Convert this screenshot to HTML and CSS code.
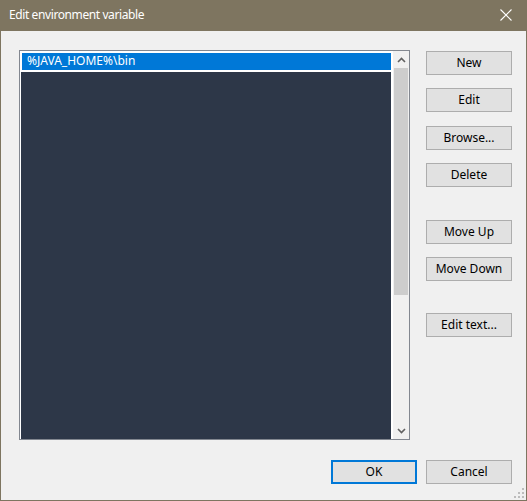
FILE: index.html
```html
<!DOCTYPE html>
<html>
<head>
<meta charset="utf-8">
<title>Edit environment variable</title>
<link rel="stylesheet" href="styles.css">
</head>
<body>
<div class="window">
  <div class="titlebar">
    <span class="title">Edit environment variable</span>
    <svg class="close" width="12" height="12" viewBox="0 0 12 12"><path d="M0.5 0.5 L11.5 11.5 M11.5 0.5 L0.5 11.5" stroke="#fff" stroke-width="1.1" fill="none"/></svg>
  </div>
  <div class="content">
    <div class="main">
      <div class="listbox">
        <div class="list">
          <div class="item"><div class="item-inner">%JAVA_HOME%\bin</div></div>
        </div>
        <div class="scrollbar">
          <div class="arrow">
            <svg width="9" height="6" viewBox="0 0 9 6"><path d="M1 5 L4.5 1.5 L8 5" stroke="#606060" stroke-width="1.6" fill="none"/></svg>
          </div>
          <div class="track"><div class="thumb"></div></div>
          <div class="arrow">
            <svg width="9" height="6" viewBox="0 0 9 6"><path d="M1 1 L4.5 4.5 L8 1" stroke="#606060" stroke-width="1.6" fill="none"/></svg>
          </div>
        </div>
      </div>
      <div class="buttons">
        <button class="btn">New</button>
        <button class="btn">Edit</button>
        <button class="btn mt14">Browse...</button>
        <button class="btn">Delete</button>
        <button class="btn group">Move Up</button>
        <button class="btn">Move Down</button>
        <button class="btn group2">Edit text...</button>
      </div>
    </div>
    <div class="footer">
      <button class="btn default">OK</button>
      <button class="btn">Cancel</button>
    </div>
    <div class="grip">
      <span class="dot d1"></span>
      <span class="dot d2"></span>
      <span class="dot d3"></span>
      <span class="dot d4"></span>
      <span class="dot d5"></span>
      <span class="dot d6"></span>
    </div>
  </div>
</div>
</body>
</html>
```
FILE: styles.css
```css
* { box-sizing: border-box; }
html, body { margin: 0; padding: 0; }
body {
  width: 527px;
  height: 501px;
  overflow: hidden;
  font-family: "Noto Sans", "Liberation Sans", sans-serif;
  font-size: 12px;
}
.window {
  width: 527px;
  height: 501px;
  border: 1px solid #7e7560;
  border-top: none;
  background: #f0f0f0;
  display: flex;
  flex-direction: column;
  position: relative;
}
.titlebar {
  height: 31px;
  background: #7e7560;
  margin: 0 -1px;
  display: flex;
  align-items: center;
  justify-content: space-between;
  padding: 0 15px 0 9px;
  color: #fff;
}
.title {
  font-size: 12px;
  line-height: 16px;
  padding-bottom: 1px;
  letter-spacing: -0.4px;
}
.close { display: block; margin-bottom: 1px; }
.content {
  flex: 1;
  position: relative;
}
.main {
  display: flex;
  padding: 19px 0 0 18px;
}
.listbox {
  width: 391px;
  height: 390px;
  border: 1px solid #828790;
  display: flex;
  background: #fff;
}
.list {
  flex: 1;
  background: #2d3748;
  border-left: 1px solid #fff;
  border-top: 1px solid #fff;
  margin-right: 2px;
}
.item {
  background: #fff;
  padding: 1px 0 2px 1px;
}
.item-inner {
  background: #0078d7;
  color: #fff;
  height: 17px;
  line-height: 16px;
  padding-left: 5px;
  white-space: nowrap;
}
.scrollbar {
  width: 16px;
  background: #f0f0f0;
  display: flex;
  flex-direction: column;
}
.arrow {
  height: 17px;
  display: flex;
  align-items: center;
  justify-content: center;
}
.track {
  flex: 1;
  padding: 0 1px;
}
.thumb {
  background: #cdcdcd;
  height: 227px;
}
.buttons {
  display: flex;
  flex-direction: column;
  margin-left: 16px;
  padding-top: 1px;
}
.btn {
  width: 86px;
  height: 24px;
  background: #e1e1e1;
  border: 1px solid #adadad;
  font-family: inherit;
  font-size: 12px;
  color: #000;
  padding: 0 0 1px 0;
  margin: 0;
  line-height: 16px;
}
.buttons .btn + .btn { margin-top: 13px; }
.buttons .btn.mt14 { margin-top: 14px; }
.buttons .btn.group { margin-top: 33px; }
.buttons .btn.group2 { margin-top: 32px; }
.footer {
  position: absolute;
  left: 0;
  right: 0;
  top: 429px;
  display: flex;
  justify-content: flex-end;
  gap: 9px;
  padding-right: 14px;
}
.btn.default {
  border: 2px solid #0078d7;
}
.grip {
  position: absolute;
  right: 2px;
  bottom: 2px;
  width: 10px;
  height: 10px;
}
.dot {
  position: absolute;
  width: 2px;
  height: 2px;
  background: #bcbcbc;
}
.d1 { right: 0; bottom: 0; }
.d2 { right: 4px; bottom: 0; }
.d3 { right: 8px; bottom: 0; }
.d4 { right: 0; bottom: 4px; }
.d5 { right: 4px; bottom: 4px; }
.d6 { right: 0; bottom: 8px; }
```
